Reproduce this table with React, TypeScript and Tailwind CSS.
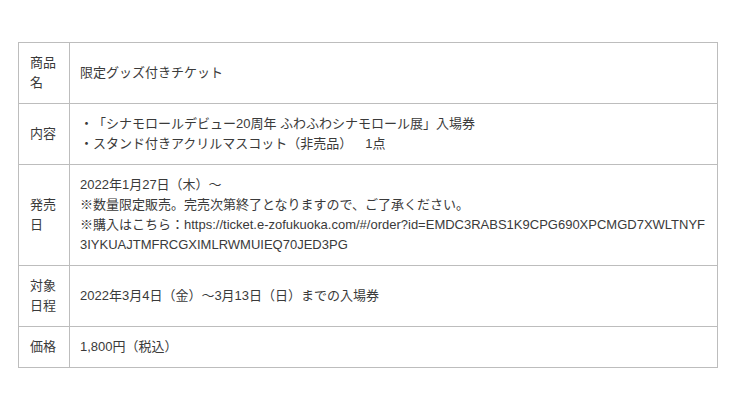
import React from "react";

const rows: { label: string; content: React.ReactNode }[] = [
  { label: "商品名", content: <p>限定グッズ付きチケット</p> },
  {
    label: "内容",
    content: (
      <>
        <p>・「シナモロールデビュー20周年 ふわふわシナモロール展」入場券</p>
        <p>・スタンド付きアクリルマスコット（非売品）　1点</p>
      </>
    ),
  },
  {
    label: "発売日",
    content: (
      <>
        <p>2022年1月27日（木）～</p>
        <p>※数量限定販売。完売次第終了となりますので、ご了承ください。</p>
        <p className="break-all">
          ※購入はこちら：https://ticket.e-zofukuoka.com/#/order?id=EMDC3RABS1K9CPG690XPCMGD7XWLTNYF
          <br />
          3IYKUAJTMFRCGXIMLRWMUIEQ70JED3PG
        </p>
      </>
    ),
  },
  { label: "対象日程", content: <p>2022年3月4日（金）～3月13日（日）までの入場券</p> },
  { label: "価格", content: <p>1,800円（税込）</p> },
];

export default function App() {
  return (
    <div
      className="w-[740px] h-[408px] bg-white pt-[42px] pl-[18px] text-[13px] leading-[20px] text-[#3a3a3a] [text-spacing-trim:space-all]"
      style={{ fontFamily: '"Liberation Sans", "Noto Sans CJK JP", sans-serif' }}
    >
      <div className="w-[700px] border border-[#bdbdbd]">
        {rows.map((r, i) => (
          <div key={i} className={`flex ${i > 0 ? "border-t border-[#bdbdbd]" : ""}`}>
            <div className="w-[51px] shrink-0 border-r border-[#bdbdbd] px-[11px] py-[10px] flex items-center">
              <span>{r.label}</span>
            </div>
            <div className="flex-1 px-[10px] py-[10px] flex flex-col justify-center">{r.content}</div>
          </div>
        ))}
      </div>
    </div>
  );
}
